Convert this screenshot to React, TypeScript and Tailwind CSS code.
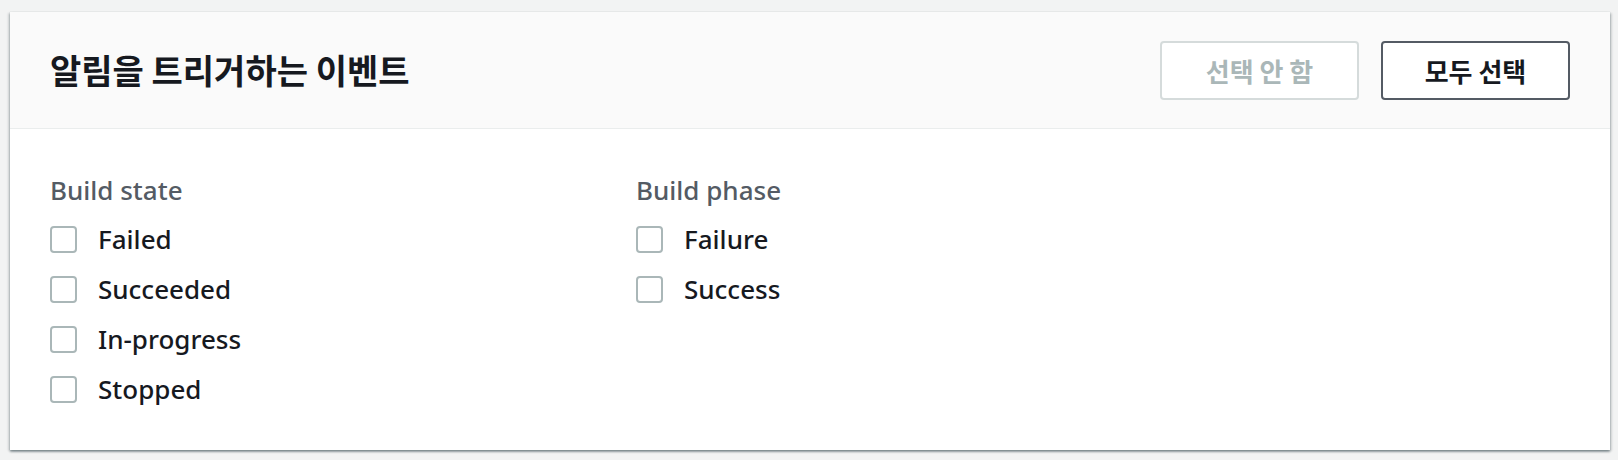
import React from 'react';

const buildState = ['Failed', 'Succeeded', 'In-progress', 'Stopped'];
const buildPhase = ['Failure', 'Success'];

function CheckRow({ label }: { label: string }) {
  return (
    <label className="flex items-center h-[36px]">
      <span className="w-[27px] h-[27px] rounded-[4px] border-2 border-[#aab7b8] bg-white shrink-0" />
      <span className="ml-[21px] text-[26px] leading-[36px] font-medium text-[#16191f]">{label}</span>
    </label>
  );
}

function Group({ title, items }: { title: string; items: string[] }) {
  return (
    <div className="w-[586px] shrink-0">
      <div className="text-[26px] leading-[36px] font-medium text-[#545b64]">{title}</div>
      <div className="mt-[13px] flex flex-col gap-[14px]">
        {items.map((item) => (
          <CheckRow key={item} label={item} />
        ))}
      </div>
    </div>
  );
}

export default function App() {
  return (
    <div
      className="w-[1618px] h-[460px] bg-[#f2f3f3] pt-[12px] pl-[10px]"
      style={{ fontFamily: '"Noto Sans", "Noto Sans CJK KR", sans-serif' }}
    >
      <div className="w-[1600px] h-[438px] bg-white shadow-[0_2px_2px_0_rgba(0,28,36,0.35),2px_1px_2px_0_rgba(0,28,36,0.12),-2px_1px_2px_0_rgba(0,28,36,0.12),0_0_1px_0_rgba(0,28,36,0.2)]">
        {/* Header */}
        <div className="h-[117px] bg-[#fafafa] border-b border-[#eaeded] flex items-center justify-between pl-[40px] pr-[40px]">
          <h2
            className="text-[34px] font-bold text-[#16191f] leading-none"
            style={{ fontFamily: '"Noto Sans CJK KR", sans-serif' }}
          >
            알림을 트리거하는 이벤트
          </h2>
          <div className="flex items-center gap-[22px]">
            <button
              disabled
              className="w-[199px] h-[59px] rounded-[4px] border-2 border-[#d5dbdb] bg-white text-[26px] font-bold text-[#aab7b8] flex items-center justify-center"
              style={{ fontFamily: '"Noto Sans CJK KR", sans-serif' }}
            >
              선택 안 함
            </button>
            <button
              className="w-[189px] h-[59px] rounded-[4px] border-2 border-[#545b64] bg-white text-[26px] font-bold text-[#16191f] flex items-center justify-center"
              style={{ fontFamily: '"Noto Sans CJK KR", sans-serif' }}
            >
              모두 선택
            </button>
          </div>
        </div>

        {/* Body */}
        <div className="flex pl-[40px] pt-[43px]">
          <Group title="Build state" items={buildState} />
          <Group title="Build phase" items={buildPhase} />
        </div>
      </div>
    </div>
  );
}
